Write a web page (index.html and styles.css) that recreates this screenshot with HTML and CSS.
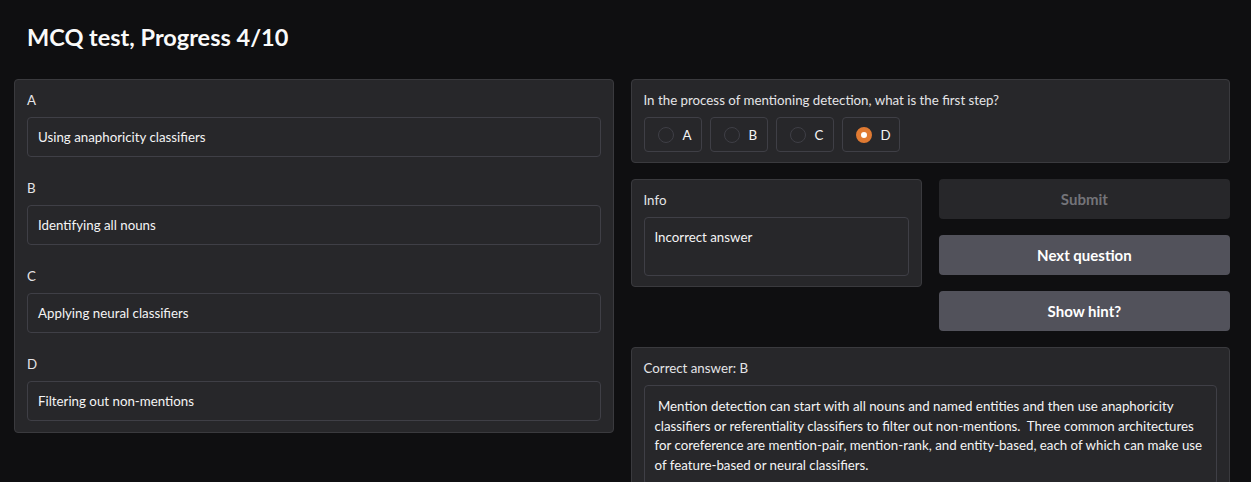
FILE: index.html
```html
<!DOCTYPE html>
<html lang="en">
<head>
<meta charset="utf-8">
<title>MCQ test</title>
<link rel="stylesheet" href="styles.css">
</head>
<body>
<h1 class="title">MCQ test, Progress 4/10</h1>
<main class="layout">
  <section class="panel options">
    <div class="field">
      <div class="label">A</div>
      <div class="box">Using anaphoricity classifiers</div>
    </div>
    <div class="field">
      <div class="label">B</div>
      <div class="box">Identifying all nouns</div>
    </div>
    <div class="field">
      <div class="label">C</div>
      <div class="box">Applying neural classifiers</div>
    </div>
    <div class="field">
      <div class="label">D</div>
      <div class="box">Filtering out non-mentions</div>
    </div>
  </section>
  <div class="right">
    <section class="panel question">
      <div class="label">In the process of mentioning detection, what is the first step?</div>
      <div class="radios">
        <label class="radio"><span class="dot"></span><span>A</span></label>
        <label class="radio"><span class="dot"></span><span>B</span></label>
        <label class="radio"><span class="dot"></span><span>C</span></label>
        <label class="radio"><span class="dot checked"></span><span>D</span></label>
      </div>
    </section>
    <div class="mid">
      <section class="panel info">
        <div class="label">Info</div>
        <div class="box tall">Incorrect answer</div>
      </section>
      <div class="buttons">
        <button class="btn disabled">Submit</button>
        <button class="btn">Next question</button>
        <button class="btn">Show hint?</button>
      </div>
    </div>
    <section class="panel answer">
      <div class="label">Correct answer: B</div>
      <div class="box para">&nbsp;Mention detection can start with all nouns and named entities and then use anaphoricity classifiers or referentiality classifiers to filter out non-mentions.&nbsp; Three common architectures for coreference are mention-pair, mention-rank, and entity-based, each of which can make use of feature-based or neural classifiers.</div>
    </section>
  </div>
</main>
</body>
</html>
```
FILE: styles.css
```css
* { box-sizing: border-box; }
html, body { height: 100%; }
body {
  margin: 0;
  background: #0f0f11;
  color: #e4e4e7;
  font-family: "Lato", "Noto Sans", sans-serif;
  font-size: 13.3px;
  overflow: hidden;
}
.title {
  margin: 0;
  padding: 21px 0 0 27px;
  height: 79px;
  font-size: 23.5px;
  line-height: 32px;
  font-weight: 700;
  color: #fafafa;
}
.layout {
  display: grid;
  grid-template-columns: 1fr 1fr;
  gap: 17px;
  padding: 0 21px 0 14px;
  align-items: start;
}
.panel {
  background: #27272a;
  border: 1px solid #3a3a3e;
  border-radius: 4px;
  padding: 11px 12px 11px;
}
.label {
  line-height: 18px;
  margin-bottom: 8px;
  color: #e4e4e7;
  font-size: 13.3px;
}
.options { display: flex; flex-direction: column; gap: 22px; }
.box {
  border: 1px solid #3f3f46;
  border-radius: 4px;
  background: #27272a;
  height: 40px;
  padding: 0 10px;
  display: flex;
  align-items: center;
  font-size: 13.3px;
  color: #f4f4f5;
}
.box.tall { height: 59px; align-items: flex-start; padding-top: 11px; }
.box.para {
  display: block;
  height: auto;
  padding: 11px 10px 8px;
  line-height: 19.7px;
}
.right { display: flex; flex-direction: column; gap: 16px; }
.question { padding-bottom: 10px; }
.radios { display: flex; gap: 8px; }
.radio {
  display: flex;
  align-items: center;
  gap: 9px;
  height: 35px;
  width: 58px;
  padding: 0 13px;
  border: 1px solid #3f3f46;
  border-radius: 4px;
  color: #f4f4f5;
}
.dot {
  width: 16px; height: 16px;
  border-radius: 50%;
  border: 1px solid #3f3f46;
  background: #27272a;
  flex: none;
}
.dot.checked {
  border: 5px solid #e07a32;
  background: #ffffff;
}
.mid {
  display: grid;
  grid-template-columns: 1fr 1fr;
  gap: 17px;
  align-items: start;
}
.info { padding-bottom: 10px; }
.buttons { display: flex; flex-direction: column; gap: 16px; }
.btn {
  height: 40px;
  border: none;
  border-radius: 4px;
  background: #52525b;
  color: #ffffff;
  font-family: inherit;
  font-size: 15px;
  font-weight: 700;
}
.btn.disabled { background: #27272a; color: #747479; }
```
